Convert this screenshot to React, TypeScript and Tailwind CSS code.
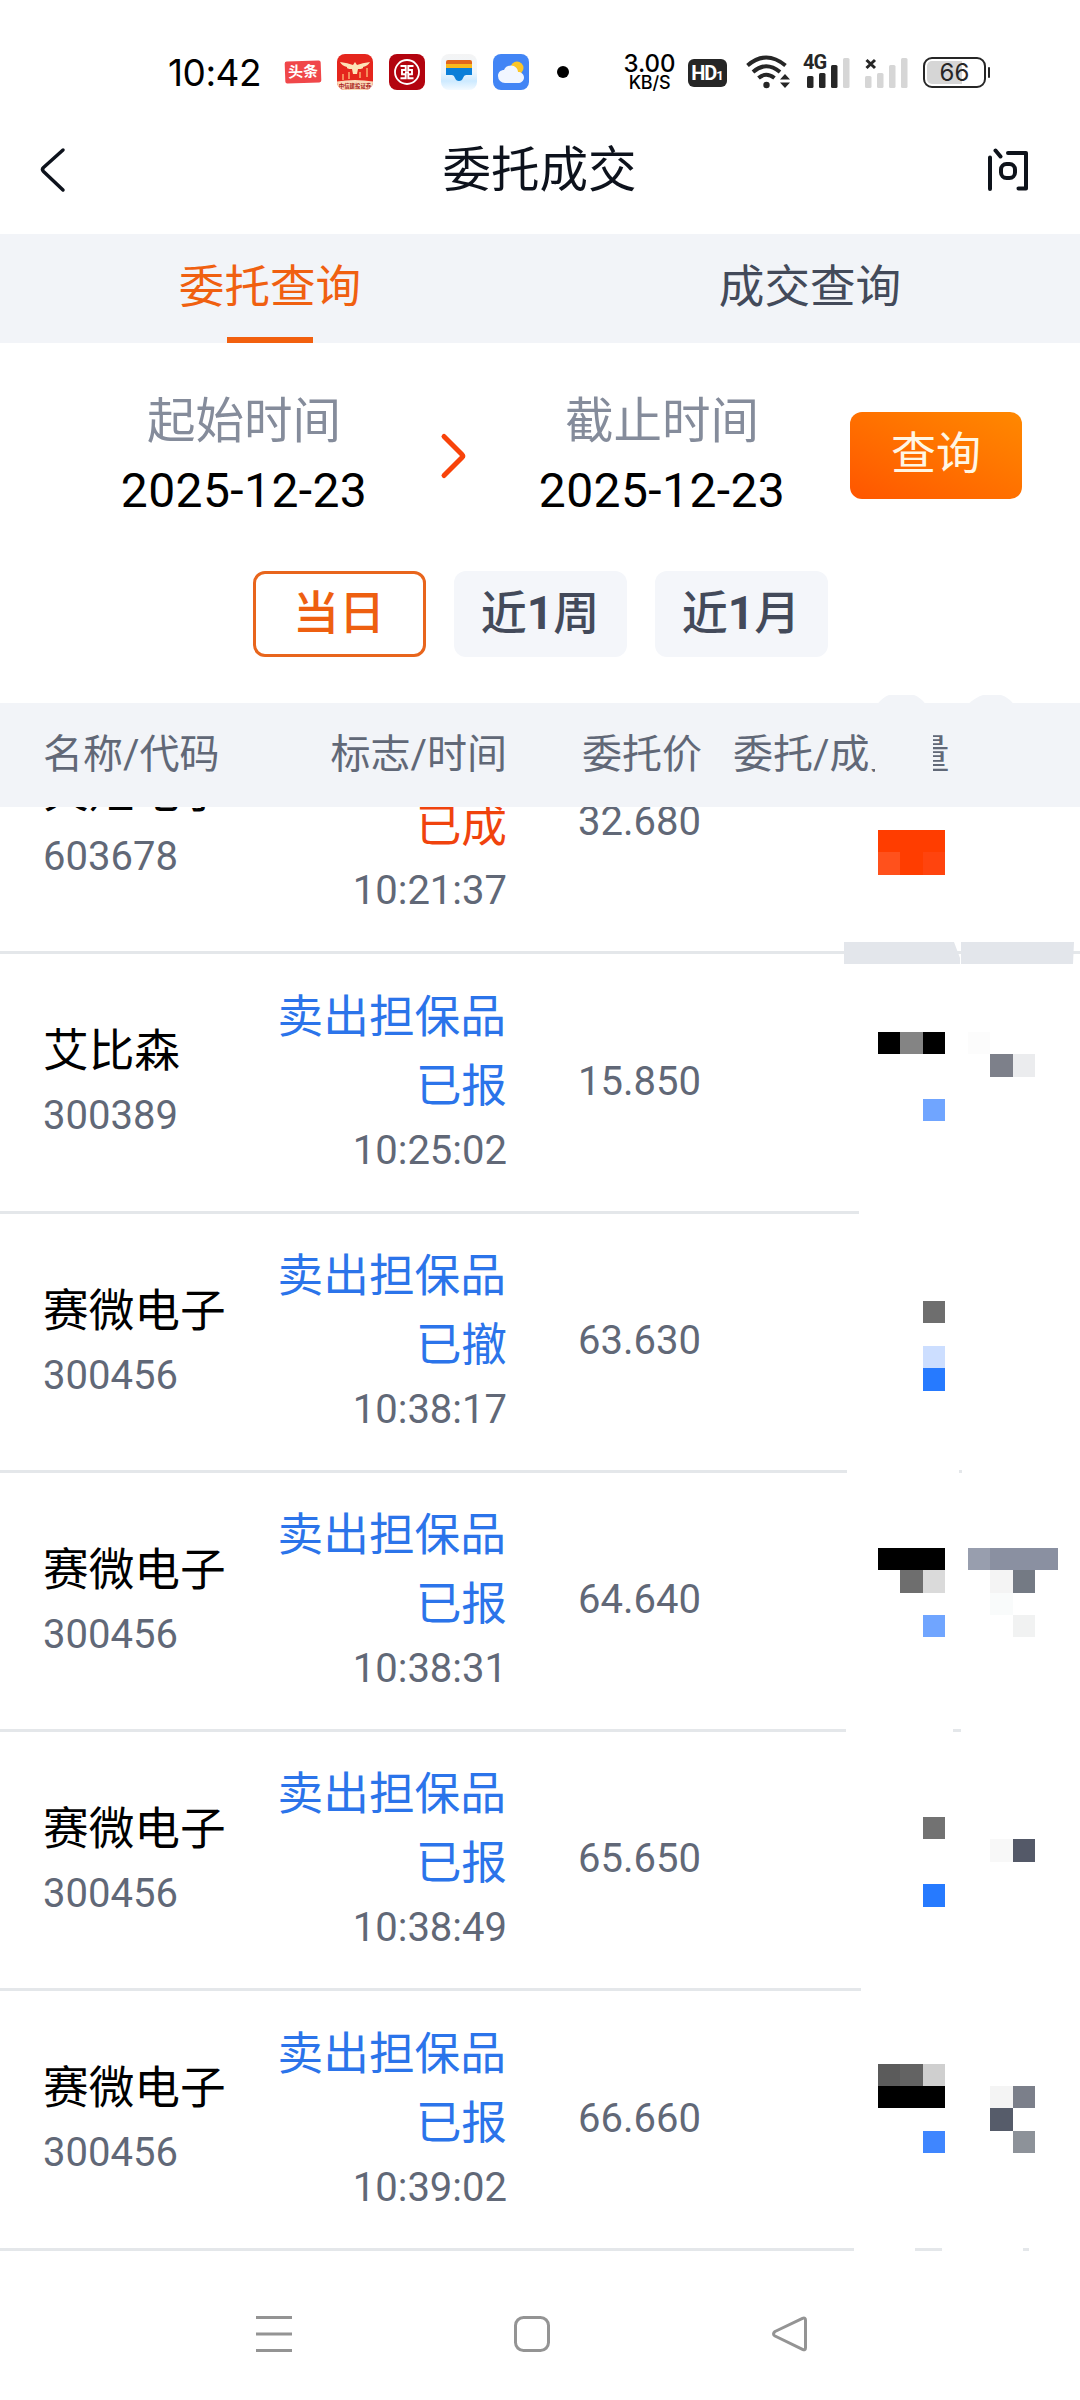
import React from "react";

type Block = [x: number, y: number, w: number, h: number, color: string];

type Order = {
  name: string;
  code: string;
  sign: string;
  state: string;
  time: string;
  price: string;
  color: string;
  top: number;
  height: number;
  rule: [start: number, end: number][];
  blocks: Block[];
};

const RED = "text-[#f0430d]";
const BLUE = "text-[#2b74ea]";

const orders: Order[] = [
  {
    name: "火炬电子", code: "603678", sign: "担保品买入", state: "已成", time: "10:21:37", price: "32.680",
    color: RED, top: 695, height: 259, rule: [[0, 1080]],
    blocks: [
      [878, 830, 67, 45, "#ff3d00"],
      [878, 852, 22, 23, "#ff511c"],
      [923, 852, 22, 23, "#ff440e"],
    ],
  },
  {
    name: "艾比森", code: "300389", sign: "卖出担保品", state: "已报", time: "10:25:02", price: "15.850",
    color: BLUE, top: 954, height: 260, rule: [[0, 859]],
    blocks: [
      [878, 1032, 22, 22, "#000"], [900, 1032, 23, 22, "#848484"], [923, 1032, 22, 22, "#000"],
      [968, 1032, 22, 22, "#fcfcfc"], [990, 1054, 23, 23, "#7d808a"], [1013, 1054, 22, 23, "#ebecee"],
      [923, 1099, 22, 22, "#70a5ff"],
    ],
  },
  {
    name: "赛微电子", code: "300456", sign: "卖出担保品", state: "已撤", time: "10:38:17", price: "63.630",
    color: BLUE, top: 1214, height: 259, rule: [[0, 847], [959, 962]],
    blocks: [
      [923, 1301, 22, 22, "#6e6e6e"], [923, 1346, 22, 22, "#ccdeff"], [923, 1368, 22, 23, "#267aff"],
    ],
  },
  {
    name: "赛微电子", code: "300456", sign: "卖出担保品", state: "已报", time: "10:38:31", price: "64.640",
    color: BLUE, top: 1473, height: 259, rule: [[0, 846], [953, 961]],
    blocks: [
      [878, 1548, 67, 22, "#000"], [968, 1548, 22, 22, "#989eae"], [990, 1548, 68, 22, "#8a90a1"],
      [900, 1570, 23, 23, "#6e6e6e"], [923, 1570, 22, 23, "#dadada"], [990, 1570, 23, 23, "#f4f4f4"],
      [1013, 1570, 22, 23, "#747a84"], [990, 1593, 23, 22, "#f9fbfb"], [923, 1615, 22, 22, "#70a5ff"],
      [1013, 1615, 22, 22, "#f1f2f2"],
    ],
  },
  {
    name: "赛微电子", code: "300456", sign: "卖出担保品", state: "已报", time: "10:38:49", price: "65.650",
    color: BLUE, top: 1732, height: 259, rule: [[0, 861]],
    blocks: [
      [923, 1817, 22, 22, "#727272"], [990, 1839, 23, 23, "#f8f8f8"], [1013, 1839, 22, 23, "#545968"],
      [923, 1884, 22, 23, "#267aff"],
    ],
  },
  {
    name: "赛微电子", code: "300456", sign: "卖出担保品", state: "已报", time: "10:39:02", price: "66.660",
    color: BLUE, top: 1991, height: 260, rule: [[0, 854], [915, 942], [1023, 1029]],
    blocks: [
      [878, 2064, 22, 22, "#5b5b5b"], [900, 2064, 23, 22, "#636363"], [923, 2064, 22, 22, "#cfcfcf"],
      [878, 2086, 67, 22, "#000"], [990, 2086, 23, 22, "#f4f4f4"], [1013, 2086, 22, 22, "#7b7f8a"],
      [990, 2108, 23, 23, "#565c6a"], [923, 2131, 22, 22, "#3f86ff"], [1013, 2131, 22, 22, "#8d9299"],
    ],
  },
];

function SignalBars({ levels, className }: { levels: number; className: string }) {
  const bars = [
    [0, 19, 12],
    [12, 16, 15],
    [24, 8, 23],
    [36, 1, 30],
  ];
  return (
    <svg className={className} width="43" height="31" viewBox="0 0 43 31">
      {bars.map(([x, y, h], i) => (
        <rect key={x} x={x} y={y} width="6.5" height={h} rx="1.5" fill={i < levels ? "#262626" : "#d6d6d6"} />
      ))}
    </svg>
  );
}

function StatusBar() {
  return (
    <div className="flex h-[110px] items-center pt-[34px] pl-[168px]">
      <div className="flex h-[38px] w-full items-center">
        <span className="w-[115px] shrink-0 font-['Inter'] text-[37px] leading-none font-normal tracking-[-0.5px] whitespace-nowrap text-black">10:42</span>

        <div className="ml-[2px] flex h-[22px] w-9 shrink-0 -rotate-2 items-center justify-center rounded-[2px] bg-[#f0474a] text-[15px] leading-none font-bold whitespace-nowrap text-white">头条</div>

        <svg className="ml-4 shrink-0" width="36" height="36" viewBox="0 0 36 36">
          <defs>
            <clipPath id="brokerClip"><rect width="36" height="36" rx="8" /></clipPath>
          </defs>
          <g clipPath="url(#brokerClip)">
            <rect width="36" height="36" fill="#e5261d" />
            <path d="M0 27.500q18-3 36 0v9H0z" fill="#fbd9b8" />
            <path d="M3 8q8 1 13 3l2-3 2 3q5-2 13-3-2 4-7 5 1 2-5 2l-1 5h-4l-1-5q-6 0-5-2Q5 12 3 8z" fill="#fde3b7" />
            <path d="M6 20v6M12 18v7M23 18v6M30 14v9" stroke="#f58a5a" strokeWidth="2" />
            <text x="18" y="33.500" textAnchor="middle" fontSize="5.400" fontWeight="700" fill="#a8201a">中信建投证券</text>
          </g>
        </svg>

        <svg className="ml-4 shrink-0" width="36" height="36" viewBox="0 0 36 36">
          <rect width="36" height="36" rx="8" fill="#b3040f" />
          <g fill="none" stroke="#fff">
            <circle cx="18" cy="18" r="12" strokeWidth="1.800" />
            <path d="M11.500 12H16.700V16H13V20.300H16.700V24.300H11.500M24.500 12H19.300V16H23V20.300H19.300V24.300H24.500M16 18.200h4" strokeWidth="1.900" />
          </g>
        </svg>

        <svg className="ml-4 shrink-0" width="36" height="36" viewBox="0 0 36 36">
          <defs>
            <linearGradient id="walletBg" x1="0" y1="0" x2="0" y2="1">
              <stop offset="0" stopColor="#f4f4f4" />
              <stop offset="0.5" stopColor="#eef6fc" />
              <stop offset="0.75" stopColor="#cdeaff" />
              <stop offset="1" stopColor="#f3faff" />
            </linearGradient>
          </defs>
          <rect width="36" height="36" rx="8" fill="url(#walletBg)" />
          <path d="M5 11V8q0-2 2-2h22q2 0 2 2v3z" fill="#e2661b" />
          <path d="M5 10h26v5H5z" fill="#f9b91c" />
          <path d="M5 14h26v7h-6q-2 0-3 3-1 3-4 3t-4-3q-1-3-3-3H5z" fill="#0b7fd8" />
        </svg>

        <svg className="ml-4 shrink-0" width="36" height="36" viewBox="0 0 36 36">
          <rect width="36" height="36" rx="8" fill="#4285f5" />
          <circle cx="24" cy="14" r="6.500" fill="#fcc627" />
          <path d="M12 29a7 7 0 0 1-7-7c0-4 3-6 6-6 1-3 4-4.500 7-4.500 4 0 7 3 7 6.500 3 0 6 2 6 5.500S28 29 25 29z" fill="#f1f6ff" />
        </svg>

        <span className="ml-7 h-3 w-3 shrink-0 rounded-full bg-black" />

        <div className="ml-[54px] flex w-[53px] shrink-0 flex-col items-center font-['Inter'] leading-none font-medium text-black">
          <span className="text-[24px] leading-[20px]">3.00</span>
          <span className="text-[18px] leading-[17px] tracking-[-0.200px]">KB/S</span>
        </div>

        <div className="mt-[2px] ml-[12px] flex h-7 w-[39px] shrink-0 items-baseline justify-center rounded-[6px] bg-[#262626] pt-[4px] font-['Roboto'] leading-none font-bold text-white">
          <span className="text-[20px] leading-[20px] tracking-[-1px]">HD</span>
          <span className="text-[13px] leading-[20px]">1</span>
        </div>

        <svg className="ml-[19px] shrink-0" width="44" height="36" viewBox="0 0 44 36">
          <g fill="none" stroke="#262626" strokeWidth="4">
            <path d="M1.500 11.500Q20 -4.500 39.500 11.500" />
            <path d="M7 18Q20 6.500 34 18" />
            <path d="M12.500 24Q20 17.500 28.500 24" />
          </g>
          <circle cx="20.500" cy="31" r="3.200" fill="#262626" />
          <path d="M34 25.500h10l-5-5.500zM34 28.500h10l-5 5.500z" fill="#262626" />
        </svg>

        <div className="relative ml-[17px] h-[34px] w-[43px] shrink-0">
          <SignalBars levels={3} className="absolute top-[2px] left-0" />
          <span className="absolute top-[-1px] left-[-4px] bg-white font-['Roboto'] text-[20px] leading-[17px] font-bold tracking-[-1px] text-[#262626]">4G</span>
        </div>
        <div className="relative ml-[15px] h-[34px] w-[43px] shrink-0">
          <SignalBars levels={0} className="absolute top-[2px] left-0" />
          <svg className="absolute top-[3px] left-0" width="12" height="12" viewBox="0 0 12 12">
            <path d="M1.500 2l8.500 8M10 2l-8.500 8" stroke="#262626" strokeWidth="3" />
          </svg>
        </div>

        <div className="mt-[1px] ml-[15px] flex shrink-0 items-center gap-[2px]">
          <div className="flex h-[31px] w-[63px] items-center justify-center rounded-[9px] border-2 border-[#262626] bg-[linear-gradient(#d6d6d6,#d6d6d6)] bg-[length:37px_100%] bg-no-repeat p-[2px] font-['Inter'] text-[24px] leading-none text-[#262626] [background-clip:content-box]">66</div>
          <span className="h-[11px] w-[2px] rounded-full bg-[#262626]" />
        </div>
      </div>
    </div>
  );
}

function TitleBar() {
  return (
    <header className="flex h-[124px] items-center justify-between pr-[49px] pb-[6px] pl-[38px] text-[#0d121c]">
      <svg width="44" height="48" viewBox="0 0 44 48" fill="none" stroke="currentColor" strokeWidth="3.500" strokeLinecap="round" strokeLinejoin="round">
        <path d="M25 5L5.500 22.500q-2 2 0 4L25 45" />
      </svg>
      <h1 className="mt-[4px] ml-[10px] text-[48.500px] leading-none">委托成交</h1>
      <svg width="44" height="48" viewBox="0 0 44 48" fill="none" stroke="#0e131b" strokeWidth="4" strokeLinecap="round" strokeLinejoin="round">
        <path d="M3 12.500v31.500M8.500 5.500l5 6M21 8h18v35.500h-7.500" />
        <rect x="14" y="19" width="14" height="14" rx="5.500" />
      </svg>
    </header>
  );
}

function DateField({ label, value }: { label: string; value: string }) {
  return (
    <div className="flex w-[246px] flex-col items-center whitespace-nowrap">
      <span className="text-[48.500px] leading-[69px] text-[#858c9b]">{label}</span>
      <span className="text-[48px] leading-[69px] tracking-[0.400px] text-black">{value}</span>
    </div>
  );
}

function Filters() {
  const chip = "flex h-[86px] w-[173px] items-center justify-center rounded-[12px] pb-[2px] text-[46px] leading-none font-medium";
  return (
    <section className="h-[360px]">
      <div className="flex h-[228px] items-center pb-[3px] pl-[121px]">
        <DateField label="起始时间" value="2025-12-23" />
        <svg className="mr-[70px] ml-[72px] shrink-0" width="30" height="48" viewBox="0 0 30 48" fill="none" stroke="#f8430a" strokeWidth="5" strokeLinecap="round" strokeLinejoin="round">
          <path d="M5 4.500l18 18q1.500 1.500 0 3L5 43.500" />
        </svg>
        <DateField label="截止时间" value="2025-12-23" />
        <button className="ml-[65px] flex h-[87px] w-[172px] items-center justify-center rounded-[12px] bg-linear-to-tr from-[#ff5500] to-[#ff8800] pb-[2px] text-[45px] leading-none text-[#fff6e4]">查询</button>
      </div>
      <div className="flex justify-center gap-[28px]">
        <button className={`${chip} border-3 border-[#e8651c] text-[#ee5f10]`}>当日</button>
        <button className={`${chip} bg-[#f4f6fa] text-[#434a5a]`}>近<b>1</b>周</button>
        <button className={`${chip} bg-[#f4f6fa] text-[#434a5a]`}>近<b>1</b>月</button>
      </div>
    </section>
  );
}

function TableHeader() {
  return (
    <div className="relative z-10 flex h-[104px] items-center bg-[#f2f4f8] pl-[43px] text-[40px] leading-none whitespace-nowrap text-[#616877]">
      <span className="w-[200px]">名称/代码</span>
      <span className="w-[264px] text-right">标志/时间</span>
      <span className="w-[195px] text-right">委托价</span>
      <span className="ml-[31px]">委托/成交量</span>
      <span className="absolute top-[20px] left-[871px] h-[64px] w-[62px] bg-[#f2f4f8] [clip-path:polygon(0_0,100%_0,100%_100%,4px_100%,4px_46px,0_46px)]" />
      <svg className="absolute -top-2 left-[878px]" width="136" height="9" viewBox="0 0 136 9" fill="#f2f4f8">
        <path d="M0 8.500Q5 2 11 0h25q6 2 11 8.500zM91 8.500Q98 2 105 0h18q7 2 12 8.500z" />
      </svg>
    </div>
  );
}

function OrderRow({ order }: { order: Order }) {
  return (
    <div className="relative flex shrink-0 items-center pb-[5px] pl-[43px] whitespace-nowrap" style={{ height: order.height }}>
      <div className="w-[200px]">
        <div className="text-[45.700px] leading-[69px] text-black">{order.name}</div>
        <div className="text-[40px] leading-[60px] text-[#616877]">{order.code}</div>
      </div>
      <div className="w-[264px] text-right">
        <div className={`pr-px text-[45.700px] leading-[69px] ${order.color}`}>{order.sign}</div>
        <div className={`text-[45.700px] leading-[69px] ${order.color}`}>{order.state}</div>
        <div className="text-[40px] leading-[60px] text-[#616877]">{order.time}</div>
      </div>
      <div className="w-[194px] text-right text-[40px] leading-[60px] text-[#616877]">{order.price}</div>
      {order.blocks.map(([x, y, w, h, color]) => (
        <i key={`${x}-${y}`} className="absolute" style={{ left: x, top: y - order.top, width: w, height: h, background: color }} />
      ))}
      {order.rule.map(([start, end]) => (
        <i key={start} className="absolute bottom-0 h-[3px] bg-[#e4e7ea]" style={{ left: start, width: end - start }} />
      ))}
    </div>
  );
}

function NavBar() {
  return (
    <nav className="flex h-[149px] items-center gap-[218px] pt-[17px] pl-[254px]">
      <svg width="40" height="40" viewBox="0 0 40 40" stroke="#949494" strokeWidth="3">
        <path d="M2 3.500h36M2 20h36M2 36.500h36" />
      </svg>
      <svg width="40" height="40" viewBox="0 0 40 40" fill="none" stroke="#949494" strokeWidth="3">
        <rect x="3.500" y="3.500" width="33" height="33" rx="8" />
      </svg>
      <svg width="40" height="40" viewBox="0 0 40 40" fill="none" stroke="#949494" strokeWidth="3" strokeLinejoin="round">
        <path d="M32.500 4.300q3-1.300 3 2v27.500q0 3-3 1.500L5 22q-3-2 0-4.500z" />
      </svg>
    </nav>
  );
}

export default function App() {
  return (
    <div className="flex h-[2400px] w-[1080px] flex-col overflow-hidden bg-white font-['Roboto','Noto_Sans_CJK_SC',sans-serif]">
      <StatusBar />
      <TitleBar />
      <div className="flex h-[109px] bg-[#f2f4f8] text-[45.600px] leading-none">
        <div className="relative flex flex-1 items-center justify-center pb-[2px] text-[#f06010]">
          委托查询
          <span className="absolute bottom-0 h-[6px] w-[86px] bg-[#f2600f]" />
        </div>
        <div className="flex flex-1 items-center justify-center pb-[2px] text-[#434a5a]">成交查询</div>
      </div>
      <Filters />
      <TableHeader />
      <main className="relative flex h-[1444px] flex-col justify-end overflow-hidden">
        {orders.map((order) => (
          <OrderRow key={order.time} order={order} />
        ))}
        <svg className="absolute top-[135px] left-[844px]" width="232" height="22" viewBox="0 0 232 22" fill="#e3e6eb">
          <path d="M0 0h110l6 16v6H0zM117 0h113l-1 22H117z" />
        </svg>
      </main>
      <NavBar />
    </div>
  );
}
